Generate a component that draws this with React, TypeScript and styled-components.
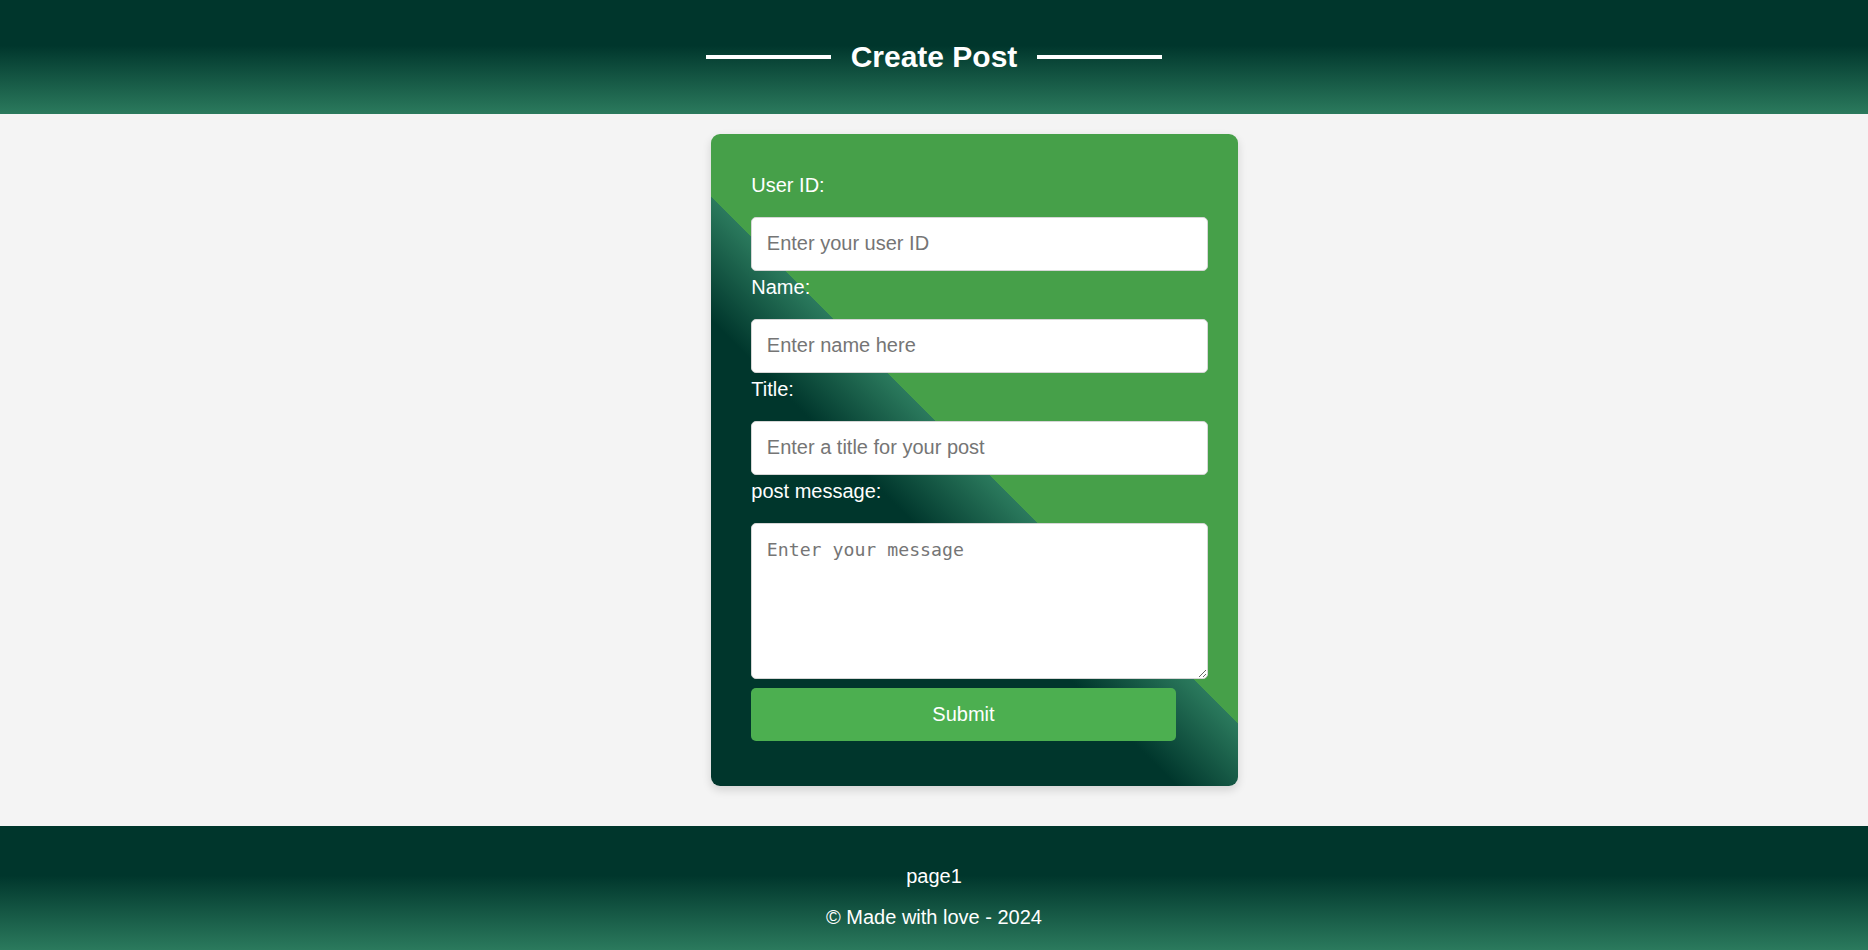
import React from "react";
import styled, { createGlobalStyle } from "styled-components";

const DARK = "#00362c";
const TEAL = "#2b7a5d";
const CARD_GREEN = "#46a049";
const BUTTON_GREEN = "#4caf50";

const GlobalStyle = createGlobalStyle`
  html, body {
    margin: 0;
    padding: 0;
    background: #f4f4f4;
    font-family: "Liberation Sans", Arial, sans-serif;
  }
  * { box-sizing: border-box; }
`;

const Page = styled.div`
  display: flex;
  flex-direction: column;
  min-height: 950px;
`;

const Header = styled.header`
  height: 114px;
  display: flex;
  align-items: center;
  justify-content: center;
  gap: 20px;
  background: linear-gradient(to bottom, ${DARK} 40%, ${TEAL} 100%);
`;

const Rule = styled.span`
  display: block;
  width: 124.5px;
  height: 4px;
  background: #ffffff;
`;

const Title = styled.h1`
  margin: 0;
  font-size: 30px;
  font-weight: 700;
  color: #ffffff;
  line-height: 1.15;
`;

const Main = styled.main`
  flex: 1;
  display: flex;
  justify-content: center;
  align-items: flex-start;
  padding: 20px 0 40px 81px;
`;

const Card = styled.form`
  width: 527px;
  padding: 39.5px 30.5px 45px 40.3px;
  border-radius: 9px;
  background: linear-gradient(
    45deg,
    ${DARK} 39.5%,
    ${TEAL} 50%,
    ${CARD_GREEN} 50%,
    ${CARD_GREEN} 100%
  );
  box-shadow: 0 4px 10px rgba(0, 0, 0, 0.14);
  display: flex;
  flex-direction: column;
  align-items: flex-start;
`;

const Label = styled.label`
  display: block;
  color: #ffffff;
  font-size: 20px;
  line-height: 22px;
  margin-bottom: 21px;
`;

const Input = styled.input`
  display: block;
  width: 100%;
  height: 54.5px;
  margin: 0 0 4.5px 0;
  padding: 0 14.5px;
  border: 1px solid #d6d6d6;
  border-radius: 5px;
  background: #ffffff;
  font-family: "Liberation Sans", Arial, sans-serif;
  font-size: 20px;
  color: #222;
  outline: none;
  &::placeholder {
    color: #757575;
  }
`;

const TextArea = styled.textarea`
  display: block;
  width: 100%;
  height: 156px;
  margin: 0 0 9.5px 0;
  padding: 15.5px 14.5px;
  border: 1px solid #d6d6d6;
  border-radius: 5px;
  background: #ffffff;
  font-family: "DejaVu Sans Mono", "Liberation Mono", monospace;
  font-size: 18.2px;
  outline: none;
  resize: vertical;
  &::placeholder {
    color: #757575;
  }
`;

const SubmitButton = styled.button`
  display: block;
  width: 424.4px;
  height: 52.7px;
  border: none;
  border-radius: 5px;
  background: ${BUTTON_GREEN};
  color: #ffffff;
  font-family: "Liberation Sans", Arial, sans-serif;
  font-size: 20px;
  cursor: pointer;
`;

const Footer = styled.footer`
  height: 124.3px;
  padding-top: 39.5px;
  display: flex;
  flex-direction: column;
  align-items: center;
  gap: 19px;
  background: linear-gradient(to bottom, ${DARK} 40%, ${TEAL} 100%);
`;

const FooterText = styled.p`
  margin: 0;
  color: #ffffff;
  font-size: 20px;
  line-height: 22px;
`;

const fields = [
  { id: "userId", label: "User ID:", placeholder: "Enter your user ID" },
  { id: "name", label: "Name:", placeholder: "Enter name here" },
  { id: "title", label: "Title:", placeholder: "Enter a title for your post" },
];

export default function App() {
  return (
    <Page>
      <GlobalStyle />
      <Header>
        <Rule />
        <Title>Create Post</Title>
        <Rule />
      </Header>
      <Main>
        <Card onSubmit={(e) => e.preventDefault()}>
          {fields.map((f) => (
            <React.Fragment key={f.id}>
              <Label htmlFor={f.id}>{f.label}</Label>
              <Input id={f.id} type="text" placeholder={f.placeholder} />
            </React.Fragment>
          ))}
          <Label htmlFor="message">post message:</Label>
          <TextArea id="message" placeholder="Enter your message" />
          <SubmitButton type="submit">Submit</SubmitButton>
        </Card>
      </Main>
      <Footer>
        <FooterText>page1</FooterText>
        <FooterText>© Made with love - 2024</FooterText>
      </Footer>
    </Page>
  );
}
